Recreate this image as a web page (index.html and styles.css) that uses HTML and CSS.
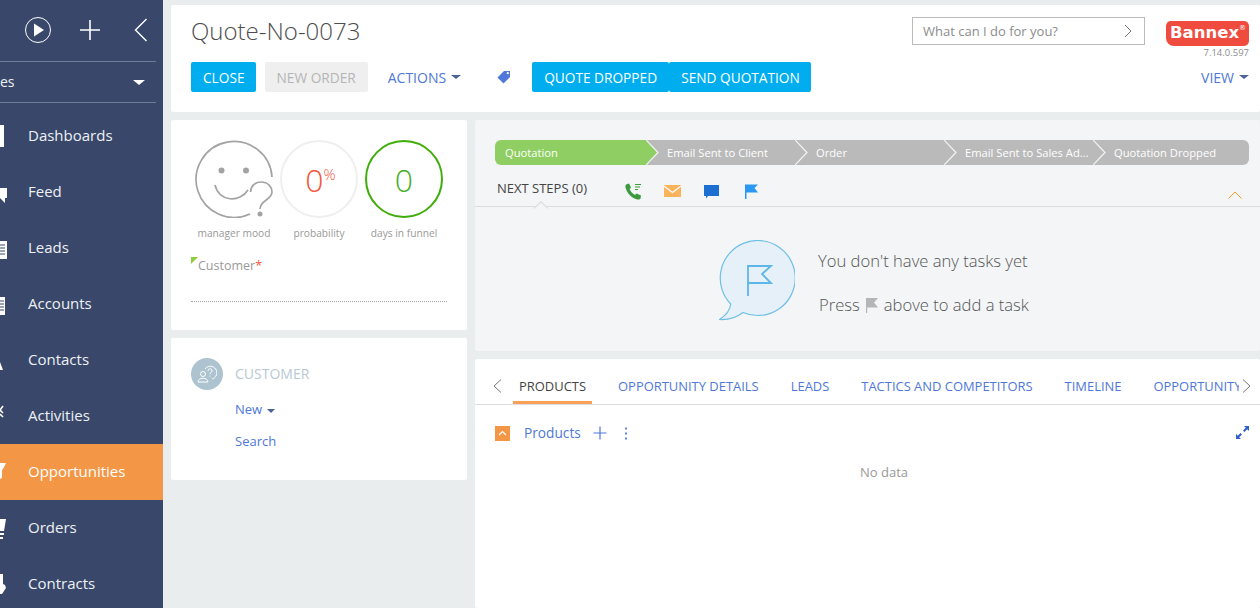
FILE: index.html
```html
<!DOCTYPE html>
<html>
<head>
  <title>Quote-No-0073</title>
  <link rel="stylesheet" href="styles.css">
</head>
<body>
  <div class="sidebar">
    <div class="side-top">
      <svg class="ic-play" width="28" height="28" viewBox="0 0 28 28"><circle cx="14" cy="14" r="12.5" fill="none" stroke="#fff" stroke-width="1"/><path d="M10 7.5 L20 14 L10 20.5 Z" fill="#fff"/></svg>
      <svg class="ic-plus" width="22" height="22" viewBox="0 0 22 22"><path d="M11 1 V21 M1 11 H21" stroke="#fff" stroke-width="1.6" fill="none"/></svg>
      <svg class="ic-back" width="14" height="24" viewBox="0 0 14 24"><path d="M12.5 1 L1.5 12 L12.5 23" stroke="#fff" stroke-width="1.4" fill="none"/></svg>
    </div>
    <div class="side-select">
      <span>es</span>
      <span class="side-caret"></span>
    </div>
    <div class="nav">
      <div class="nav-item">
        <svg class="nav-ic" width="28" height="28" viewBox="0 0 28 28"><rect x="0" y="3" width="4" height="22" fill="#fff"/></svg>
        Dashboards
      </div>
      <div class="nav-item">
        <svg class="nav-ic" width="28" height="28" viewBox="0 0 28 28"><path d="M0 10 H7 V20 H5 V25 L0 20 Z" fill="#fff"/></svg>
        Feed
      </div>
      <div class="nav-item">
        <svg class="nav-ic" width="28" height="28" viewBox="0 0 28 28"><rect x="0" y="7" width="7" height="18" fill="#fff"/><path d="M0 11 H5 M0 14 H5 M0 17 H5 M0 20 H5" stroke="#39486a" stroke-width="1"/></svg>
        Leads
      </div>
      <div class="nav-item">
        <svg class="nav-ic" width="28" height="28" viewBox="0 0 28 28"><rect x="0" y="7" width="5" height="18" fill="#fff"/><path d="M0 11 H4 M0 14 H4 M0 17 H4 M0 20 H4" stroke="#39486a" stroke-width="1"/></svg>
        Accounts
      </div>
      <div class="nav-item">
        <svg class="nav-ic" width="28" height="28" viewBox="0 0 28 28"><path d="M0 16 L3 24 H0 Z" fill="#fff"/></svg>
        Contacts
      </div>
      <div class="nav-item">
        <svg class="nav-ic" width="28" height="28" viewBox="0 0 28 28"><path d="M3 4 L0 8 L3 11 M0 8 H1" stroke="#fff" stroke-width="1.6" fill="none"/><path d="M0 12 L3 15" stroke="#fff" stroke-width="1.6"/></svg>
        Activities
      </div>
      <div class="nav-item active">
        <svg class="nav-ic" width="28" height="28" viewBox="0 0 28 28"><path d="M0 5 H6 L3 11 L2 12 V20 L0 21 Z" fill="#fff"/></svg>
        Opportunities
      </div>
      <div class="nav-item">
        <svg class="nav-ic" width="28" height="28" viewBox="0 0 28 28"><path d="M0 5 H6 L4 17 H0 Z M0 19 H4 V21 H0 Z M0 23 H3 V25 H0 Z" fill="#fff"/></svg>
        Orders
      </div>
      <div class="nav-item">
        <svg class="nav-ic" width="28" height="28" viewBox="0 0 28 28"><path d="M0 4 H3 V14 L5 15 L6 18 L2 24 H0 Z" fill="#fff"/></svg>
        Contracts
      </div>
    </div>
  </div>

  <div class="main">
    <div class="header card">
      <div class="header-left">
        <div class="title">Quote-No-0073</div>
        <div class="actions">
          <div class="btn btn-blue close-btn">CLOSE</div>
          <div class="btn btn-off">NEW ORDER</div>
          <div class="link-btn">ACTIONS <span class="caret"></span></div>
          <svg class="tag-ic" width="14" height="14" viewBox="0 0 14 14"><path d="M7 1 H13 V7 L6.5 13.5 L0.5 7.5 Z" fill="#4f78d8"/><circle cx="10.8" cy="3.2" r="1.1" fill="#fff"/></svg>
          <div class="btn-group">
            <div class="btn btn-blue">QUOTE DROPPED</div>
            <div class="btn btn-blue send-btn">SEND QUOTATION</div>
          </div>
        </div>
      </div>
      <div class="header-right">
        <div class="search-row">
          <div class="search">
            <span>What can I do for you?</span>
            <svg width="8" height="14" viewBox="0 0 8 14"><path d="M1 1 L7 7 L1 13" stroke="#777" stroke-width="1" fill="none"/></svg>
          </div>
          <div class="brand">
            <div class="logo">Bannex<sup>®</sup></div>
            <div class="version">7.14.0.597</div>
          </div>
        </div>
        <div class="link-btn view-btn">VIEW <span class="caret"></span></div>
      </div>
    </div>

    <div class="columns">
      <div class="left-col">
        <div class="card info-card">
          <div class="gauges">
            <div class="gauge">
              <svg width="78" height="78" viewBox="0 0 78 78" fill="none" stroke="#a3a3a3" stroke-width="1.7">
                <path d="M77 37 A38 38 0 1 0 55 74"/>
                <circle cx="26.500" cy="30.500" r="3" fill="#a3a3a3" stroke="none"/>
                <circle cx="51" cy="30.500" r="3" fill="#a3a3a3" stroke="none"/>
                <path d="M20 45 C24 62 45 63 53 50"/>
                <path d="M55.500 52 C56 45 61 42 66 42 C73 42 77 47 77 52 C77 60 65 60 65 69"/>
                <circle cx="65" cy="74" r="2.500" fill="#a3a3a3" stroke="none"/>
              </svg>
              <div class="gauge-label">manager mood</div>
            </div>
            <div class="gauge">
              <div class="ring ring-grey"><span class="num-red">0</span><sup class="pct">%</sup></div>
              <div class="gauge-label">probability</div>
            </div>
            <div class="gauge">
              <div class="ring ring-green"><span class="num-green">0</span></div>
              <div class="gauge-label">days in funnel</div>
            </div>
          </div>
          <div class="customer-field">Customer<span class="req">*</span></div>
          <div class="dotted"></div>
        </div>

        <div class="card customer-card">
          <div class="avatar">
            <svg width="20" height="20" viewBox="0 0 20 20" fill="none" stroke="#fff" stroke-width="1"><circle cx="6" cy="10" r="2.500"/><path d="M1 18 C1 13 11 13 11 18 Z"/><path d="M8 5 A6.500 6.500 0 1 1 15 15"/><path d="M11 7 C11 4 15 4 15 7 C15 8.500 13 8.500 13 10 M13 11.500 V12.500"/></svg>
          </div>
          <div class="customer-body">
            <div class="customer-title">CUSTOMER</div>
            <div class="customer-link">New <span class="caret caret-small"></span></div>
            <div class="customer-link">Search</div>
          </div>
        </div>
      </div>

      <div class="right-col">
        <div class="steps-panel">
          <div class="stages">
            <div class="stage stage-first">Quotation<svg class="arrow" width="13" height="25" viewBox="0 0 13 25"><path d="M0 0 L12 12.500 L0 25 Z"/><path class="arrow-line" d="M0 0 L12 12.500 L0 25"/></svg></div>
            <div class="stage">Email Sent to Client<svg class="arrow" width="13" height="25" viewBox="0 0 13 25"><path d="M0 0 L12 12.500 L0 25 Z"/><path class="arrow-line" d="M0 0 L12 12.500 L0 25"/></svg></div>
            <div class="stage">Order<svg class="arrow" width="13" height="25" viewBox="0 0 13 25"><path d="M0 0 L12 12.500 L0 25 Z"/><path class="arrow-line" d="M0 0 L12 12.500 L0 25"/></svg></div>
            <div class="stage">Email Sent to Sales Ad...<svg class="arrow" width="13" height="25" viewBox="0 0 13 25"><path d="M0 0 L12 12.500 L0 25 Z"/><path class="arrow-line" d="M0 0 L12 12.500 L0 25"/></svg></div>
            <div class="stage stage-last">Quotation Dropped</div>
          </div>
          <div class="next-row">
            <div class="next-title">NEXT STEPS (0)</div>
            <svg class="next-ic phone" width="17" height="17" viewBox="0 0 17 17"><path d="M1 1.500 L4 0.500 L6 4.500 L4.500 6 C5.500 8.500 7.500 10.500 10 12 L11.500 10.500 L16 12.500 L15.500 15.500 C15 16.500 13 16.800 11.500 16.200 C6 14.500 2 10 0.500 4.500 C0.300 3.500 0.500 2.300 1 1.500 Z" fill="#3a9a3c"/><path d="M10 1.500 H16 M10 4 H15 M10 6.500 H13" stroke="#3a9a3c" stroke-width="1.200"/></svg>
            <svg class="next-ic mail" width="17" height="12" viewBox="0 0 17 12"><rect width="17" height="12" fill="#fcb45c"/><path d="M0 1 L8.500 7.500 L17 1" fill="none" stroke="#fff" stroke-width="1.200"/></svg>
            <svg class="next-ic chat" width="15" height="15" viewBox="0 0 15 15"><path d="M0 1 H15 V12 H4 L2 14.500 V12 H0 Z" fill="#1c6fd0"/></svg>
            <svg class="next-ic flag" width="13" height="15" viewBox="0 0 13 15"><path d="M0 0.500 H13 L9.500 4 L13 8.500 H1.500 V15 H0 Z" fill="#2a97f2"/></svg>
            <svg class="collapse-ic" width="14" height="8" viewBox="0 0 14 8"><path d="M0.500 7.500 L7 1 L13.500 7.500" fill="none" stroke="#f59a23" stroke-width="1"/></svg>
            <span class="notch"></span>
          </div>
          <div class="empty">
            <svg class="bubble" width="76" height="81" viewBox="0 0 76 81">
              <path d="M11.700 64 A37.500 37.500 0 1 1 24 72.500 C17 78 9 80 0.500 79.500 C6 76 11 71 11.700 64 Z" fill="#e6f0f8" stroke="#6fbfe6" stroke-width="1.200"/>
              <path d="M29 56 V26 H52 L43 34 L52 43 H29" fill="none" stroke="#5cb6e8" stroke-width="1.800"/>
            </svg>
            <div class="empty-text">
              <div class="empty-line">You don't have any tasks yet</div>
              <div class="empty-line">Press <svg class="mini-flag" width="12" height="15" viewBox="0 0 12 15"><path d="M0 0 H12 L8 4.500 L12 9.500 H1.200 V15 H0 Z" fill="#b5b5b5"/></svg> above to add a task</div>
            </div>
          </div>
        </div>

        <div class="detail-panel">
          <div class="tabs">
            <svg class="tab-arrow" width="9" height="14" viewBox="0 0 9 14"><path d="M8 0.500 L1 7 L8 13.500" fill="none" stroke="#777" stroke-width="1"/></svg>
            <div class="tab-list">
              <div class="tab tab-active">PRODUCTS</div>
              <div class="tab">OPPORTUNITY DETAILS</div>
              <div class="tab">LEADS</div>
              <div class="tab">TACTICS AND COMPETITORS</div>
              <div class="tab">TIMELINE</div>
              <div class="tab">OPPORTUNITY</div>
            </div>
            <svg class="tab-arrow" width="9" height="14" viewBox="0 0 9 14"><path d="M1 0.500 L8 7 L1 13.500" fill="none" stroke="#777" stroke-width="1"/></svg>
          </div>
          <div class="products-row">
            <div class="toggle"><svg width="9" height="6" viewBox="0 0 9 6"><path d="M1 5 L4.500 1.500 L8 5" fill="none" stroke="#fff" stroke-width="1.200"/></svg></div>
            <div class="products-title">Products</div>
            <svg class="prod-plus" width="14" height="14" viewBox="0 0 14 14"><path d="M7 0.500 V13.500 M0.500 7 H13.500" stroke="#4f78d8" stroke-width="1.200"/></svg>
            <svg class="prod-dots" width="4" height="13" viewBox="0 0 4 13"><path d="M2 0.500 V2.500 M2 5.500 V7.500 M2 10.500 V12.500" stroke="#4f78d8" stroke-width="1.800"/></svg>
            <svg class="prod-expand" width="13" height="13" viewBox="0 0 13 13"><path d="M8 0 H13 V5 L11.200 3.200 L8.500 6 L7 4.500 L9.800 1.800 Z M5 13 H0 V8 L1.800 9.800 L4.500 7 L6 8.500 L3.200 11.200 Z" fill="#2f5fc9"/></svg>
          </div>
          <div class="no-data">No data</div>
        </div>
      </div>
    </div>
  </div>
</body>
</html>
```

FILE: styles.css
```css
html, body {
  margin: 0;
  height: 100%;
  overflow: hidden;
}

body {
  display: flex;
  width: 1260px;
  height: 608px;
  background-color: #e9edee;
  font-family: "Open Sans", Arial, sans-serif;
}

svg {
  display: block;
  flex-shrink: 0;
}

.sidebar {
  width: 163px;
  flex-shrink: 0;
  background-color: #39486a;
  color: #eef0f4;
}

.side-top {
  height: 59px;
  padding-bottom: 2px;
  margin-right: 7px;
  display: flex;
  align-items: center;
  border-bottom: 1px solid #6e7b95;
}

.ic-play {
  margin-left: 24px;
}

.ic-plus {
  margin-left: 27px;
}

.ic-back {
  margin-left: 33px;
}

.side-select {
  height: 40px;
  margin-right: 7px;
  border-bottom: 1px solid #6e7b95;
  display: flex;
  align-items: center;
  justify-content: space-between;
  font-size: 14px;
}

.side-select span:first-child {
  margin-top: -2px;
}

.side-caret {
  width: 0;
  height: 0;
  margin-right: 11px;
  border-left: 6px solid transparent;
  border-right: 6px solid transparent;
  border-top: 5px solid #fff;
}

.nav {
  margin-top: 5px;
}

.nav-item {
  height: 56px;
  box-sizing: border-box;
  padding-bottom: 2px;
  display: flex;
  align-items: center;
  font-size: 15px;
}

.nav-ic {
  width: 28px;
  margin-top: 2px;
}

.nav-item.active {
  background-color: #f39646;
  color: #fff;
}

.main {
  flex: 1;
  padding: 5px 0 0 8px;
  min-width: 0;
}

.card {
  background-color: #fff;
  border-radius: 2px;
}

.header {
  height: 107px;
  display: flex;
  justify-content: space-between;
  box-sizing: border-box;
  padding: 0 11px 0 20px;
}

.title {
  font-size: 24px;
  font-weight: 300;
  color: #4d4d4d;
  height: 57px;
  line-height: 52px;
}

.actions {
  display: flex;
  align-items: center;
  height: 30px;
}

.btn {
  height: 30px;
  line-height: 31px;
  padding: 0 12px;
  font-size: 13.700px;
  border-radius: 2px;
}

.btn-blue {
  background-color: #00aeef;
  color: #fff;
}

.close-btn {
  padding-right: 11px;
  margin-right: 9px;
}

.send-btn {
  padding: 0 11px 0 12px;
}

.btn-off {
  background-color: #efefef;
  color: #b5b5b5;
}

.link-btn {
  font-size: 14px;
  color: #4f78d8;
  display: flex;
  align-items: center;
}

.actions .link-btn {
  margin-left: 20px;
}

.caret {
  display: inline-block;
  width: 0;
  height: 0;
  margin-left: 5px;
  border-left: 5px solid transparent;
  border-right: 5px solid transparent;
  border-top: 4px solid #4a6296;
}

.caret-small {
  margin-top: 3px;
  border-left-width: 4.500px;
  border-right-width: 4.500px;
}

.tag-ic {
  margin-left: 36px;
}

.btn-group {
  display: flex;
  margin-left: 21px;
}

.header-right {
  display: flex;
  flex-direction: column;
  align-items: flex-end;
}

.search-row {
  display: flex;
  height: 57px;
  padding-top: 12px;
  box-sizing: border-box;
}

.search {
  width: 233px;
  height: 28px;
  box-sizing: border-box;
  border: 1px solid #bbb;
  padding: 0 12px 0 10px;
  display: flex;
  align-items: center;
  justify-content: space-between;
  font-size: 13px;
  color: #8c8c8c;
}

.brand {
  margin-left: 21px;
  margin-top: 4px;
  width: 83px;
}

.logo {
  height: 25px;
  line-height: 24px;
  background-color: #ef4b3f;
  border-radius: 5px 5px 5px 8px;
  color: #fff;
  font-family: "DejaVu Sans", Arial, sans-serif;
  font-size: 16.500px;
  font-weight: bold;
  padding-left: 4px;
  white-space: nowrap;
}

.logo sup {
  font-size: 7px;
  line-height: 0;
  font-weight: normal;
  vertical-align: 8px;
}

.version {
  font-size: 9.500px;
  color: #8c8c8c;
  text-align: right;
  line-height: 14px;
}

.view-btn {
  height: 30px;
}

.columns {
  display: flex;
  margin-top: 8px;
  gap: 8px;
}

.left-col {
  width: 296px;
  flex-shrink: 0;
}

.info-card {
  height: 210px;
  box-sizing: border-box;
  padding: 20px 20px 0;
}

.gauges {
  display: flex;
  gap: 7px;
  margin-left: 4px;
}

.gauge {
  width: 78px;
  display: flex;
  flex-direction: column;
  align-items: center;
}

.ring {
  width: 78px;
  height: 78px;
  box-sizing: border-box;
  border-radius: 50%;
  display: flex;
  align-items: center;
  justify-content: center;
  font-weight: 300;
}

.ring-grey {
  border: 2px solid #efefef;
  padding-left: 3px;
}

.ring-green {
  border: 2px solid #3fae0b;
}

.num-red {
  font-size: 32px;
  color: #f4553b;
}

.num-green {
  font-size: 32px;
  color: #47ae2a;
}

.pct {
  font-size: 15px;
  color: #f4553b;
  line-height: 1;
  margin-bottom: 10px;
}

.gauge-label {
  font-size: 10.200px;
  color: #999;
  margin-top: 7px;
  line-height: 16px;
  white-space: nowrap;
}

.customer-field {
  position: relative;
  margin-top: 16px;
  padding-left: 7px;
  font-size: 12.500px;
  line-height: 18px;
  color: #999;
}

.customer-field::before {
  content: "";
  position: absolute;
  left: 0;
  top: 0;
  border-top: 7px solid #8fd03a;
  border-right: 7px solid transparent;
}

.req {
  color: #f4553b;
}

.dotted {
  margin-top: 26px;
  border-top: 1px dotted #aaa;
}

.customer-card {
  height: 142px;
  margin-top: 8px;
  box-sizing: border-box;
  padding: 20px 20px 0;
  display: flex;
  gap: 12px;
}

.avatar {
  width: 32px;
  height: 32px;
  border-radius: 50%;
  background-color: #adc3d0;
  display: flex;
  align-items: center;
  justify-content: center;
  flex-shrink: 0;
}

.customer-title {
  font-size: 14px;
  line-height: 32px;
  color: #b8c8d4;
}

.customer-link {
  margin-top: 10px;
  margin-bottom: 14px;
  font-size: 13px;
  line-height: 18px;
  color: #4f78d8;
  display: flex;
  align-items: center;
}

.customer-link + .customer-link {
  margin-top: 0;
}

.right-col {
  flex: 1;
  min-width: 0;
}

.steps-panel {
  height: 231px;
  box-sizing: border-box;
  padding-top: 20px;
  background-color: #f3f5f7;
  border-radius: 2px;
}

.stages {
  display: flex;
  height: 25px;
  margin: 0 11px 0 20px;
}

.stage {
  position: relative;
  width: 149px;
  box-sizing: border-box;
  padding-left: 21px;
  background-color: #bababa;
  color: #fff;
  font-size: 11.200px;
  line-height: 25px;
  white-space: nowrap;
}

.stage-first {
  width: 151px;
  padding-left: 10px;
  background-color: #8fce62;
  border-radius: 6px 0 0 6px;
}

.stage-last {
  flex: 1;
  border-radius: 0 6px 6px 0;
}

.arrow {
  position: absolute;
  left: 100%;
  top: 0;
  z-index: 1;
  fill: #bababa;
}

.stage-first .arrow {
  fill: #8fce62;
}

.arrow-line {
  fill: none;
  stroke: #f3f5f7;
  stroke-width: 1.200;
}

.next-row {
  position: relative;
  height: 41px;
  border-bottom: 1px solid #d9dce0;
  display: flex;
  align-items: center;
  padding-left: 22px;
}

.next-title {
  width: 128px;
  font-size: 13px;
  color: #444;
  margin-top: 5px;
}

.next-ic {
  margin-top: 11px;
}

.mail {
  margin-left: 22px;
}

.chat {
  margin-left: 23px;
}

.flag {
  margin-left: 26px;
}

.collapse-ic {
  position: absolute;
  right: 18px;
  top: 26px;
}

.notch {
  position: absolute;
  left: 61px;
  bottom: -7px;
  width: 9px;
  height: 9px;
  background-color: #f3f5f7;
  border-left: 1px solid #d9dce0;
  border-top: 1px solid #d9dce0;
  transform: rotate(45deg);
}

.empty {
  display: flex;
  margin-top: 33px;
  margin-left: 244px;
}

.empty-text {
  margin-left: 23px;
  margin-top: 7px;
}

.empty-line {
  font-size: 16.600px;
  font-weight: 300;
  line-height: 28px;
  color: #555;
  display: flex;
  align-items: center;
  gap: 6px;
  height: 28px;
  margin-bottom: 16px;
}

.empty-line + .empty-line {
  margin-left: 1px;
}

.detail-panel {
  height: 249px;
  margin-top: 8px;
  background-color: #fff;
  border-radius: 2px;
}

.tabs {
  height: 45px;
  border-bottom: 1px solid #ddd;
  display: flex;
  align-items: center;
  padding-left: 18px;
  padding-right: 9px;
}

.tab-arrow {
  margin-top: 9px;
}

.tab-list {
  flex: 1;
  min-width: 0;
  height: 45px;
  display: flex;
  gap: 20px;
  overflow: hidden;
  margin: 0 3px 0 11px;
}

.tab {
  height: 45px;
  box-sizing: border-box;
  padding: 0 6px;
  line-height: 55px;
  font-size: 12.950px;
  color: #4f78d8;
  white-space: nowrap;
}

.tab-active {
  color: #444;
  border-bottom: 3px solid #f8a055;
}

.products-row {
  position: relative;
  display: flex;
  align-items: center;
  height: 16px;
  margin-top: 20px;
  padding-left: 20px;
}

.toggle {
  width: 15px;
  height: 15px;
  background-color: #f39646;
  display: flex;
  align-items: center;
  justify-content: center;
}

.products-title {
  margin-left: 14px;
  margin-top: -2px;
  font-size: 13.700px;
  color: #4f78d8;
}

.prod-plus {
  margin-left: 12px;
}

.prod-dots {
  margin-left: 17px;
}

.prod-expand {
  position: absolute;
  right: 11px;
  top: 1px;
}

.no-data {
  margin-top: 22px;
  width: 818px;
  text-align: center;
  font-size: 13px;
  color: #999;
}
```
